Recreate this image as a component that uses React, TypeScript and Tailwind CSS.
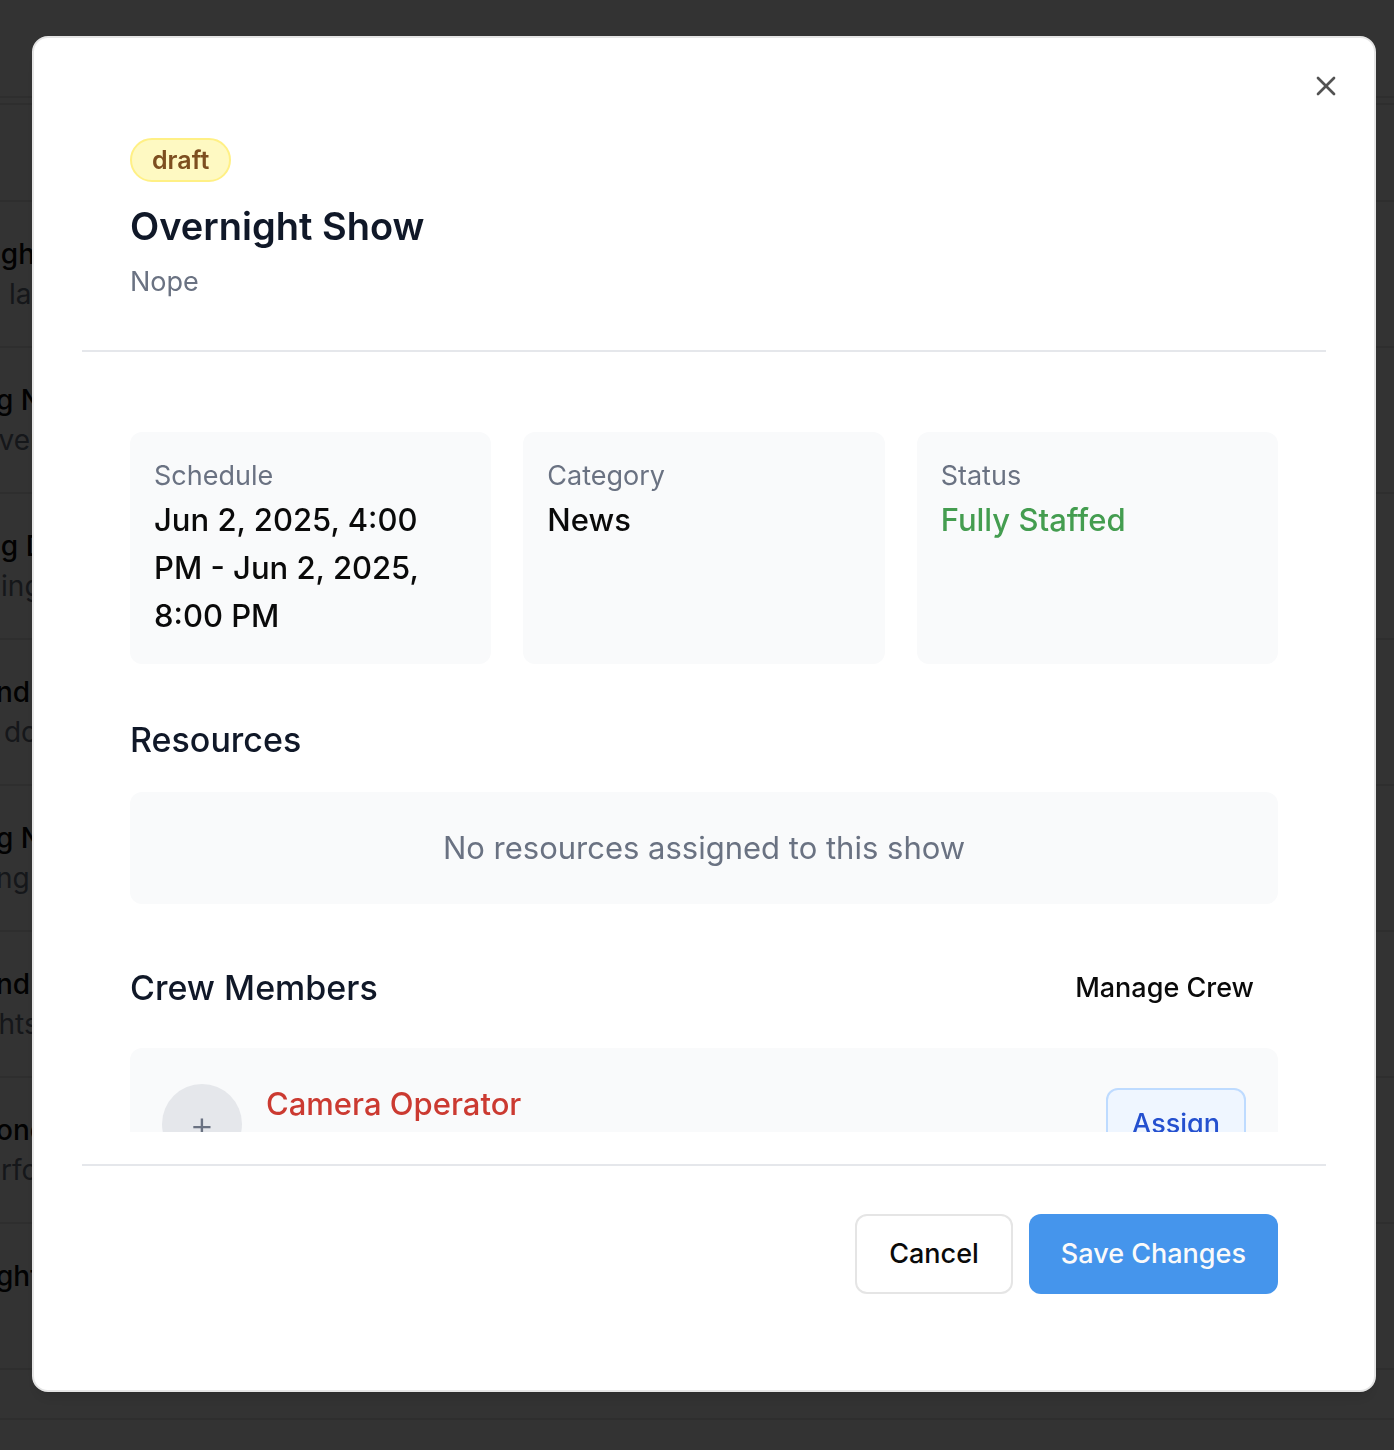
import { X } from "lucide-react";

const shows = [
  { title: "\u2009gh", note: "\u00a0\u2009la" },
  { title: "g N", note: "\u200aver" },
  { title: "\u2009g D", note: "\u2009ing" },
  { title: "nd", note: "\u00a0do" },
  { title: "g N", note: "ng r" },
  { title: "nd.", note: "\u200ahts" },
  { title: "onc", note: "\u2009rfo" },
  { title: "ght", note: "" },
];

function ShowList() {
  return (
    <div aria-hidden="true" className="min-h-screen bg-white">
      <div className="h-[98px] border-b-2 border-neutral-200" />
      <div className="mt-[5px] border-y-2 border-neutral-200">
        <div className="h-[95px]" />
        {shows.map((show, i) => (
          <div key={i} className="-ml-1 h-[146px] border-t-2 border-neutral-200 pt-8 text-[28px] leading-10 whitespace-nowrap">
            <div className="font-medium text-neutral-950">{show.title}</div>
            <div className="text-gray-500">{show.note}</div>
          </div>
        ))}
        <div className="h-[50px] border-t-2 border-neutral-200" />
      </div>
    </div>
  );
}

function InfoCard({ label, value, tone }: { label: string; value: string; tone: string }) {
  return (
    <div className="rounded-xl bg-gray-50 p-6">
      <dt className="text-[27px] leading-10 text-gray-500">{label}</dt>
      <dd className={`text-[31px] leading-12 font-medium ${tone}`}>{value}</dd>
    </div>
  );
}

export default function App() {
  return (
    <div className="h-screen overflow-hidden font-['Inter',sans-serif] text-neutral-950">
      <ShowList />
      <div className="fixed inset-0 flex bg-black/80 pt-9 pr-[18px] pb-[58px] pl-8">
        <div
          role="dialog"
          aria-modal="true"
          aria-labelledby="show-title"
          className="relative flex min-w-0 flex-1 flex-col rounded-2xl border-2 border-neutral-200 bg-white px-12 pb-12 shadow-lg"
        >
          <button type="button" aria-label="Close" className="absolute top-8 right-8 opacity-70">
            <X size={32} />
          </button>

          <header className="flex flex-col items-start border-b-2 border-gray-200 px-12 pt-[100px] pb-12">
            <span className="mb-4 rounded-full border-2 border-yellow-200 bg-yellow-100 px-5 py-1 text-[25px] leading-8 font-semibold text-[#7d4f20]">
              draft
            </span>
            <h2 id="show-title" className="mb-2 text-[38px] leading-14 font-semibold text-gray-900">
              Overnight Show
            </h2>
            <p className="text-[27px] leading-10 text-gray-500">Nope</p>
          </header>

          <div className="flex min-h-0 flex-1 flex-col gap-12 overflow-hidden px-12 pt-20">
            <dl className="grid shrink-0 grid-cols-3 gap-8">
              <InfoCard label="Schedule" value="Jun 2, 2025, 4:00 PM - Jun 2, 2025, 8:00 PM" tone="text-neutral-950" />
              <InfoCard label="Category" value="News" tone="text-neutral-950" />
              <InfoCard label="Status" value="Fully Staffed" tone="text-[#449d50]" />
            </dl>

            <section className="shrink-0">
              <h3 className="mb-6 text-[34px] leading-14 font-medium text-gray-900">Resources</h3>
              <p className="rounded-xl bg-gray-50 p-8 text-center text-[31px] leading-12 text-gray-500">
                No resources assigned to this show
              </p>
            </section>

            <section className="shrink-0">
              <div className="mb-6 flex items-center justify-between">
                <h3 className="text-[34px] leading-14 font-medium text-gray-900">Crew Members</h3>
                <button type="button" className="h-18 rounded-xl px-6 text-[27px] leading-10 font-medium">
                  Manage Crew
                </button>
              </div>
              <div className="flex items-center gap-6 rounded-xl bg-gray-50 p-8">
                <div className="flex size-20 items-center justify-center rounded-full bg-gray-200 text-[38px] leading-10 font-light text-gray-500">
                  +
                </div>
                <div className="min-h-22 flex-1 text-[31px] leading-12 font-medium text-[#cb3a31]">Camera Operator</div>
                <button
                  type="button"
                  className="h-18 rounded-xl border-2 border-blue-200 bg-blue-50 px-6 text-[27px] leading-10 font-medium text-[#2450cf]"
                >
                  Assign
                </button>
              </div>
            </section>
          </div>

          <footer className="mt-8 flex justify-end gap-4 border-t-2 border-gray-200 px-12 pt-12 pb-12">
            <button type="button" className="h-20 rounded-xl border-2 border-neutral-200 bg-white px-8 text-[27px] leading-10 font-medium">
              Cancel
            </button>
            <button type="button" className="h-20 rounded-xl bg-[#4595ec] px-8 text-[27px] leading-10 font-medium text-neutral-50">
              Save Changes
            </button>
          </footer>
        </div>
      </div>
    </div>
  );
}
